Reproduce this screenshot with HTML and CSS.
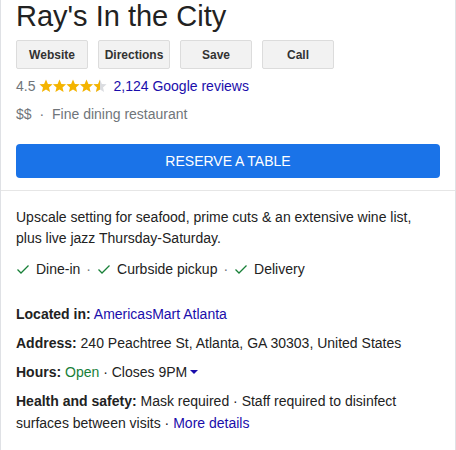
FILE: index.html
```html
<!DOCTYPE html>
<html>
<head>
<meta charset="utf-8">
<link rel="stylesheet" href="styles.css">
</head>
<body>
<div class="card">
  <div class="top">
    <h1 class="title">Ray's In the City</h1>
    <div class="actions">
      <a class="btn">Website</a>
      <a class="btn">Directions</a>
      <a class="btn">Save</a>
      <a class="btn">Call</a>
    </div>
    <div class="rating">
      <span class="score">4.5</span>
      <svg class="stars" width="68" height="14" viewBox="0 0 68 14">
        <defs>
          <path id="st" d="M7 0.6 L8.9 5 L13.6 5.3 L10 8.4 L11.1 13 L7 10.5 L2.9 13 L4 8.4 L0.4 5.3 L5.1 5 Z"/>
          <clipPath id="half"><rect x="0" y="0" width="7" height="14"/></clipPath>
        </defs>
        <use href="#st" x="0" fill="#f4b400"/>
        <use href="#st" x="13.5" fill="#f4b400"/>
        <use href="#st" x="27" fill="#f4b400"/>
        <use href="#st" x="40.5" fill="#f4b400"/>
        <g transform="translate(54 0)">
          <use href="#st" fill="#dadce0"/>
          <use href="#st" fill="#f4b400" clip-path="url(#half)"/>
        </g>
      </svg>
      <a class="link">2,124 Google reviews</a>
    </div>
    <div class="meta">$$ <span class="dot">·</span> Fine dining restaurant</div>
    <a class="reserve">RESERVE A TABLE</a>
  </div>
  <div class="body">
    <p class="desc">Upscale setting for seafood, prime cuts &amp; an extensive wine list, plus live jazz Thursday-Saturday.</p>
    <div class="services">
      <span class="svc"><svg class="check" width="14" height="14" viewBox="0 0 14 14"><path d="M1.5 7.5 L5 11 L12.5 3.5" fill="none" stroke="#188038" stroke-width="1.3"/></svg>Dine-in</span>
      <span class="sep">·</span>
      <span class="svc"><svg class="check" width="14" height="14" viewBox="0 0 14 14"><path d="M1.5 7.5 L5 11 L12.5 3.5" fill="none" stroke="#188038" stroke-width="1.3"/></svg>Curbside pickup</span>
      <span class="sep">·</span>
      <span class="svc"><svg class="check" width="14" height="14" viewBox="0 0 14 14"><path d="M1.5 7.5 L5 11 L12.5 3.5" fill="none" stroke="#188038" stroke-width="1.3"/></svg>Delivery</span>
    </div>
    <div class="attrs">
      <div class="attr"><b>Located in:</b> <a class="link">AmericasMart Atlanta</a></div>
      <div class="attr"><b>Address:</b> 240 Peachtree St, Atlanta, GA 30303, United States</div>
      <div class="attr"><b>Hours:</b> <span class="open">Open</span> · Closes 9PM<svg class="caret" width="10" height="10" viewBox="0 0 10 10"><path d="M1 3 L9 3 L5 7 Z" fill="#1a0dab"/></svg></div>
      <div class="attr"><b>Health and safety:</b> <span>Mask required · Staff required to disinfect</span> <span>surfaces between visits ·</span> <a class="link">More details</a></div>
    </div>
  </div>
</div>
</body>
</html>
```

FILE: styles.css
```css
html, body {
  margin: 0;
  padding: 0;
  background: #fff;
}
body {
  font-family: "Liberation Sans", Arial, sans-serif;
  color: #222;
  font-size: 14px;
}
.card {
  width: 456px;
  height: 450px;
  box-sizing: border-box;
  border-left: 1px solid #dfe1e5;
  border-right: 1px solid #dfe1e5;
  overflow: hidden;
}
.top {
  padding: 0 15px 12px 15px;
  border-bottom: 1px solid #e6e6e6;
}
.title {
  margin: 0;
  font-weight: normal;
  font-size: 29px;
  line-height: 34px;
  color: #222;
  margin-top: -1px;
}
.actions {
  display: flex;
  gap: 10px;
  margin-top: 7px;
}
.btn {
  width: 72px;
  height: 29px;
  box-sizing: border-box;
  display: flex;
  align-items: center;
  justify-content: center;
  background: #f2f2f2;
  border: 1px solid #dcdcdc;
  border-radius: 2px;
  font-size: 12px;
  font-weight: bold;
  color: #333;
}
.rating {
  display: flex;
  align-items: center;
  margin-top: 4px;
  height: 26px;
}
.score {
  color: #70757a;
  margin-right: 4px;
}
.stars {
  margin-right: 6px;
  margin-top: -1px;
}
.link {
  color: #1a0dab;
}
.meta {
  color: #70757a;
  line-height: 20px;
  margin-top: 5px;
}
.dot {
  margin: 0 4px;
}
.reserve {
  display: flex;
  align-items: center;
  justify-content: center;
  height: 34px;
  margin-top: 20px;
  background: #1a73e8;
  border-radius: 4px;
  color: #fff;
  font-size: 14px;
}
.body {
  padding: 0 15px;
}
.desc {
  margin: 16px 0 0 0;
  line-height: 21px;
}
.services {
  display: flex;
  align-items: center;
  margin-top: 10px;
  line-height: 20px;
}
.svc {
  display: flex;
  align-items: center;
}
.check {
  margin-right: 6px;
}
.sep {
  color: #70757a;
  margin: 0 6px;
}
.attrs {
  margin-top: 24px;
}
.attr {
  line-height: 22px;
  margin-bottom: 7px;
}
.attr b {
  color: #222;
}
.open {
  color: #188038;
}
.caret {
  margin-left: 2px;
  vertical-align: 0;
}
```
